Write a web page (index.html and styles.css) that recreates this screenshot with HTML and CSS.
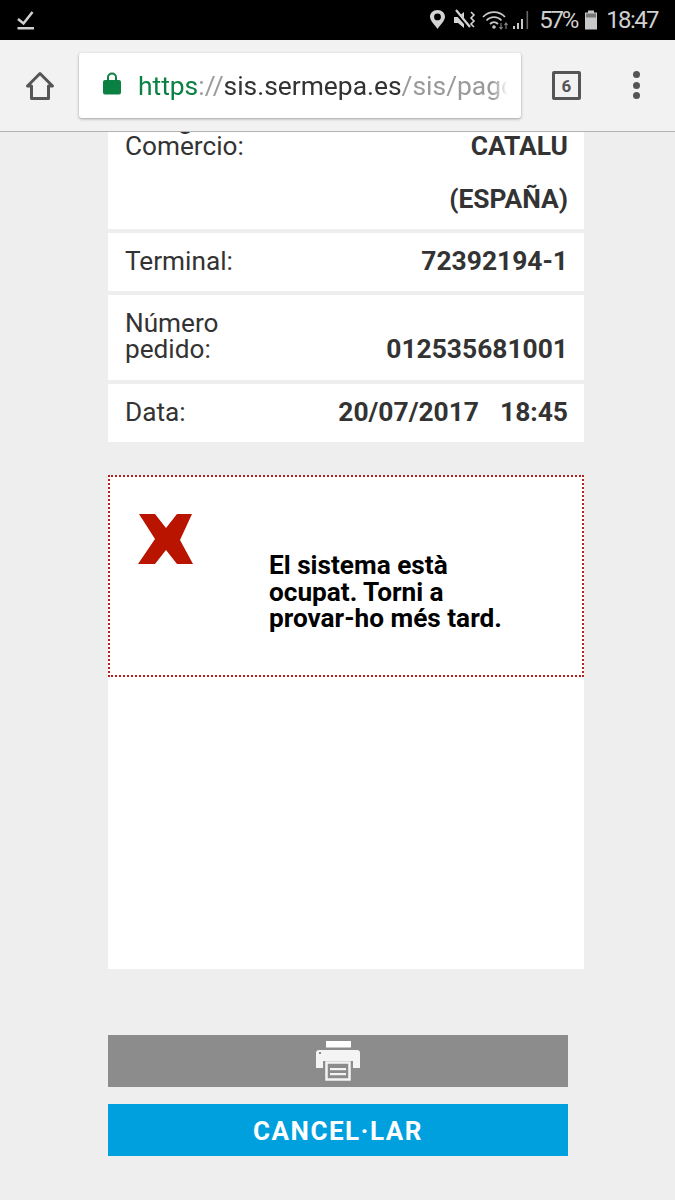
FILE: index.html
```html
<!DOCTYPE html>
<html lang="ca">
<head>
<meta charset="utf-8">
<title>Pagament</title>
<link rel="stylesheet" href="styles.css">
</head>
<body>
<header class="chrome">
  <div class="status">
    <svg class="st-check" width="20" height="24" viewBox="0 0 20 24"><path d="M1 11 L6.500 15.500 L15.500 4" fill="none" stroke="#d0d0d0" stroke-width="2.600"/><rect x="0.500" y="19" width="16.500" height="2.500" fill="#d0d0d0"/></svg>
    <div class="st-right">
      <svg width="17" height="22" viewBox="0 0 17 22"><path fill-rule="evenodd" d="M8.500 1 C4 1 1 4.300 1 7.800 C1 12 6 16 8.500 20 C11 16 16 12 16 7.800 C16 4.300 13 1 8.500 1 Z M8.500 4.500 A3.400 3.400 0 1 1 8.500 11.300 A3.400 3.400 0 1 1 8.500 4.500 Z" fill="#d4d4d4"/></svg>
      <svg class="st-mute" width="24" height="22" viewBox="0 0 24 22"><path d="M1 8 H5 L11 3 V19 L5 14 H1 Z" fill="#d4d4d4"/><path d="M2 2 L17 19" stroke="#000" stroke-width="4"/><path d="M3 1 L17 18" stroke="#d4d4d4" stroke-width="2.200"/><path d="M18 3 L21 6 L18 9 L21 12 L18 15 L21 18" fill="none" stroke="#d4d4d4" stroke-width="1.600"/></svg>
      <svg class="st-wifi" width="28" height="22" viewBox="0 0 28 22"><path d="M1 8 C7 1.500 17 1.500 23 8 M4.500 11.500 C8.500 7 15.500 7 19.500 11.500 M8 15 C10.500 12.500 13.500 12.500 16 15" fill="none" stroke="#c8c8c8" stroke-width="1.800"/><circle cx="12" cy="18" r="1.800" fill="#c8c8c8"/><path d="M19 14 V20 M17.500 18 L19 20 L20.500 18 M24 20 V14 M22.500 16 L24 14 L25.500 16" fill="none" stroke="#888" stroke-width="1.100"/></svg>
      <svg class="st-bars" width="18" height="22" viewBox="0 0 18 22"><rect x="1" y="17" width="2" height="3" fill="#c8c8c8"/><rect x="5" y="14" width="2" height="6" fill="#c8c8c8"/><rect x="9" y="10" width="2" height="10" fill="#c8c8c8"/><rect x="14.500" y="2" width="1.600" height="18" fill="#666"/></svg>
      <span class="st-pct">57%</span>
      <svg class="st-batt" width="14" height="22" viewBox="0 0 14 22"><rect x="4" y="1.500" width="6" height="3" fill="#c8c8c8"/><rect x="1" y="3.500" width="12" height="17" fill="#c8c8c8"/><rect x="2" y="4.500" width="10" height="4" fill="#777"/></svg>
      <span class="st-time">18:47</span>
    </div>
  </div>
  <div class="toolbar">
    <svg class="home" width="30" height="30" viewBox="0 0 30 30"><path d="M2.500 15 L15 2.500 L27.500 15 H23.500 V27.500 H6.500 V15 Z" fill="none" stroke="#555" stroke-width="3" stroke-linejoin="round"/></svg>
    <div class="omnibox">
      <svg class="lock" width="18" height="24" viewBox="0 0 18 24"><path fill-rule="evenodd" d="M2 9 H4 V6.500 A5 5 0 0 1 14 6.500 V9 H16 A2 2 0 0 1 18 11 V21.500 A2 2 0 0 1 16 23.500 H2 A2 2 0 0 1 0 21.500 V11 A2 2 0 0 1 2 9 Z M6 9 H12 V6.500 A3 3 0 0 0 6 6.500 Z" fill="#0b8043"/></svg>
      <div class="url"><span class="u-scheme">https</span><span class="u-sep">://</span><span class="u-host">sis.sermepa.es</span><span class="u-path">/sis/pago</span></div>
    </div>
    <div class="tabs">6</div>
    <div class="menu"><i></i><i></i><i></i></div>
  </div>
</header>

<main class="page">
  <section class="details">
    <div class="row row-first">
      <div class="label">Código Comercio:</div>
      <div class="value">CATALU<br>(ESPAÑA)</div>
    </div>
    <div class="row">
      <div class="label">Terminal:</div>
      <div class="value">72392194-1</div>
    </div>
    <div class="row row-order">
      <div class="label">Número pedido:</div>
      <div class="value">012535681001</div>
    </div>
    <div class="row">
      <div class="label">Data:</div>
      <div class="value value-date"><span>20/07/2017</span><span>18:45</span></div>
    </div>
  </section>

  <section class="panel">
    <div class="error">
      <svg class="error-x" width="55" height="51" viewBox="0 0 55 51"><path d="M1 0 H17 L28 14 L39 0 H54 L42 26 L55 50 H39 L28 36 L17 50 H0 L17 25 Z" fill="#b81400"/></svg>
      <p class="error-text">El sistema està ocupat. Torni a provar-ho més tard.</p>
    </div>
  </section>

  <div class="actions">
    <button class="btn btn-print" type="button">
      <svg width="44" height="40" viewBox="0 0 44 40"><rect x="10" y="0" width="25" height="6.500" fill="#fff"/><path fill-rule="evenodd" d="M3 9 H41 A3 3 0 0 1 44 12 V27 H37 V20 H7 V27 H0 V12 A3 3 0 0 1 3 9 Z" fill="#f4f4f4"/><rect x="3" y="11" width="2" height="2" fill="#8c8c8c"/><rect x="10.500" y="21.500" width="23" height="17" fill="none" stroke="#f4f4f4" stroke-width="2.500"/><rect x="14" y="27" width="16" height="2.200" fill="#f4f4f4"/><rect x="14" y="32" width="16" height="2.200" fill="#f4f4f4"/></svg>
    </button>
    <button class="btn btn-cancel" type="button">CANCEL·LAR</button>
  </div>
</main>
</body>
</html>
```
FILE: styles.css
```css
* {
  box-sizing: border-box;
}

html,
body {
  margin: 0;
  padding: 0;
}

body {
  background: #eeeeee;
  font-family: Roboto, "Liberation Sans", sans-serif;
  overflow: hidden;
}

/* Browser chrome sits above the scrolled page */
.chrome {
  position: relative;
  z-index: 2;
}

.status {
  height: 40px;
  background: #000;
  display: flex;
  align-items: center;
  justify-content: space-between;
  padding: 0 17px;
  color: #cfcfcf;
}

.st-right {
  display: flex;
  align-items: center;
  height: 40px;
}

.st-mute {
  margin-left: 7px;
}

.st-wifi {
  margin-left: 5px;
}

.st-bars {
  margin-left: 2px;
}

.st-pct {
  font-size: 24px;
  margin-left: 9px;
  letter-spacing: -2.200px;
}

.st-batt {
  margin-left: 7px;
}

.st-time {
  font-size: 24px;
  margin-left: 8px;
  letter-spacing: -1.600px;
}

.toolbar {
  height: 92px;
  background: #f2f2f2;
  border-bottom: 1px solid #b4b4b4;
  display: flex;
  align-items: flex-start;
  padding: 13px 0 0 25px;
}

.home {
  margin-top: 18px;
  flex: none;
}

.omnibox {
  width: 442px;
  height: 65px;
  margin-left: 24px;
  background: #fff;
  border-radius: 3px;
  box-shadow: 0 1px 3px rgba(0, 0, 0, 0.35);
  display: flex;
  align-items: center;
  padding: 0 13px 0 24px;
  flex: none;
}

.lock {
  flex: none;
  margin-top: -5px;
}

.url {
  margin-left: 17px;
  font-size: 26.400px;
  white-space: nowrap;
  overflow: hidden;
  flex: 1;
  -webkit-mask-image: linear-gradient(to right, #000 96%, transparent 100%);
  mask-image: linear-gradient(to right, #000 96%, transparent 100%);
}

.u-scheme {
  color: #0b8043;
}

.u-sep,
.u-path {
  color: #9a9a9a;
}

.u-host {
  color: #333;
}

.tabs {
  width: 29px;
  height: 29px;
  margin: 18px 0 0 31px;
  border: 3px solid #555;
  border-radius: 2px;
  color: #555;
  font-size: 17px;
  font-weight: 700;
  display: flex;
  align-items: center;
  justify-content: center;
  flex: none;
}

.menu {
  margin: 18px 0 0 52px;
  display: flex;
  flex-direction: column;
  gap: 3.500px;
}

.menu i {
  display: block;
  width: 7px;
  height: 7px;
  border-radius: 50%;
  background: #555;
}

/* Page content, scrolled partly under the toolbar */
.page {
  margin-top: -15px;
  padding: 0 91px 44px 108px;
}

.details {
  display: flex;
  flex-direction: column;
  gap: 4px;
}

.row {
  background: #fff;
  display: flex;
  justify-content: space-between;
  align-items: last baseline;
  padding: 2px 16px 3px 17px;
  color: #333;
  font-size: 26.200px;
}

.row-first {
  align-items: flex-start;
  padding-top: 3px;
}

.row-first .label {
  margin-top: -13px;
  width: 130px;
}

.label {
  line-height: 26px;
}

.row-order {
  padding-top: 15px;
  padding-bottom: 4px;
}

.row-order .label {
  width: 130px;
}

.value {
  font-size: 26.400px;
  font-weight: 700;
  line-height: 53px;
  text-align: right;
}

.value-date {
  display: flex;
  gap: 21px;
}

.panel {
  height: 494px;
  margin-top: 33px;
  background: #fff;
}

.error {
  height: 202px;
  border: 2px dotted #b82020;
  display: flex;
  align-items: flex-start;
  padding: 37px 0 0 28px;
}

.error-x {
  flex: none;
}

.error-text {
  margin: 38px 0 0 76px;
  width: 250px;
  font-size: 26.200px;
  font-weight: 700;
  line-height: 26.500px;
  color: #000;
}

.actions {
  width: 460px;
  margin-top: 66px;
  display: flex;
  flex-direction: column;
  gap: 17px;
}

.btn {
  height: 52px;
  border: 0;
  padding: 0;
  margin: 0;
  display: flex;
  align-items: center;
  justify-content: center;
  font-family: inherit;
}

.btn-print {
  background: #8c8c8c;
}

.btn-cancel {
  padding-top: 2px;
  background: #00a0df;
  color: #fff;
  font-size: 26px;
  font-weight: 700;
  letter-spacing: 1.500px;
}
```
